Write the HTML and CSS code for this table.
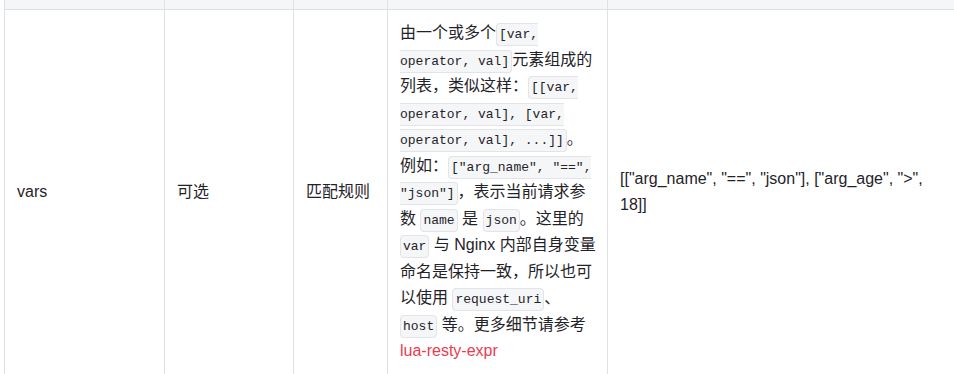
FILE: index.html
```html
<!DOCTYPE html>
<html lang="zh-CN">
<head>
<meta charset="utf-8">
<title>vars</title>
<link rel="stylesheet" href="styles.css">
</head>
<body>
<div class="wrap">
<table class="doc-table">
  <colgroup>
    <col class="c1"><col class="c2"><col class="c3"><col class="c4"><col class="c5">
  </colgroup>
  <thead>
    <tr class="head"><th></th><th></th><th></th><th></th><th></th></tr>
  </thead>
  <tbody>
    <tr>
      <td>vars</td>
      <td>可选</td>
      <td>匹配规则</td>
      <td class="desc">由一个或多个<code>[var, operator, val]</code>元素组成的列表，类似这样：<code>[[var, operator, val], [var, operator, val], ...]]</code>。例如：<code>["arg_name", "==", "json"]</code>，表示当前请求参数 <code>name</code> 是 <code>json</code>。这里的 <code>var</code> 与 Nginx 内部自身变量命名是保持一致，所以也可以使用 <code>request_uri</code>、<code>host</code> 等。更多细节请参考 <a class="link" href="#">lua-resty-expr</a></td>
      <td class="example">[["arg_name", "==", "json"], ["arg_age", "&gt;", 18]]</td>
    </tr>
  </tbody>
</table>
</div>
</body>
</html>
```
FILE: styles.css
```css
html, body {
  margin: 0;
  padding: 0;
  background: #ffffff;
}

.wrap {
  padding-left: 4px;
  width: 1000px;
  overflow: hidden;
}

.doc-table {
  border-collapse: collapse;
  table-layout: fixed;
  width: 964px;
  font-family: "Liberation Sans", "Noto Sans CJK SC", sans-serif;
  font-size: 16px;
  color: #1f2329;
  line-height: 26.5px;
}

.c1 { width: 160px; }
.c2 { width: 129px; }
.c3 { width: 94px; }
.c4 { width: 220px; }
.c5 { width: 361px; }

.doc-table th,
.doc-table td {
  border: 1px solid #dee0e3;
  padding: 10px 12px;
  vertical-align: middle;
  text-align: left;
  word-wrap: break-word;
}

.doc-table td.desc {
  padding-right: 11px;
}

.doc-table td.example {
  padding-right: 30px;
}

.head th {
  background: #f5f6f7;
  height: 9px;
  padding: 0;
  border-top: none;
}

code {
  font-family: "Liberation Mono", "DejaVu Sans Mono", monospace;
  font-size: 13px;
  line-height: 1;
  background: #f5f6f7;
  border: 1px solid #e2e4e8;
  border-radius: 4px;
  padding: 3px 2px;
  color: #1f2329;
}

.link {
  color: #eb3b50;
  text-decoration: none;
}
```
